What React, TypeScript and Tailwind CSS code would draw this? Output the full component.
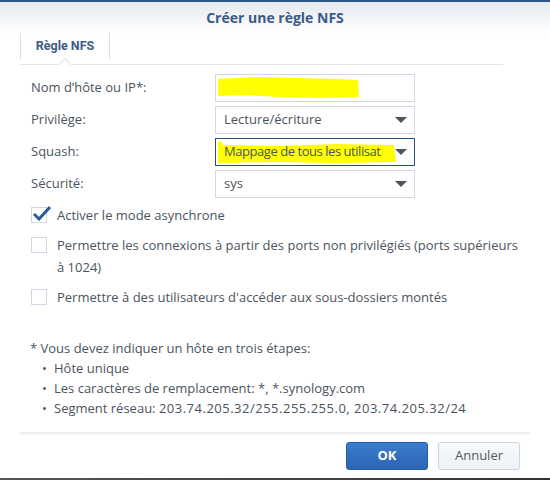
import React from "react";

const font = { fontFamily: "'Open Sans', Roboto, sans-serif" };
const tabFont = { fontFamily: "Roboto, 'Open Sans', sans-serif" };

function Caret() {
  return (
    <svg width="12" height="7" viewBox="0 0 12 7" className="shrink-0">
      <polygon points="0,0 12,0 6,6" fill="#4b5560" />
    </svg>
  );
}

function Select({ value, focused, highlight }: { value: string; focused?: boolean; highlight?: boolean }) {
  return (
    <div
      className={`relative flex h-[28px] w-[200px] items-center justify-between border pl-[8px] pr-[7px] ${
        focused ? "border-[#2b4f80]" : "border-[#cfd8e2]"
      }`}
    >
      {highlight && (
        <svg className="absolute left-[2px] top-[1px]" width="178" height="24" viewBox="0 0 178 24">
          <polygon points="0,2 3,1 5,5 60,6 120,4 176,5 178,22 120,23 60,22 0,23" fill="#ffff00" />
        </svg>
      )}
      <span
        className={`relative whitespace-nowrap text-[13px] text-[#4a545e] ${
          highlight ? "tracking-[-0.45px]" : ""
        }`}
      >
        {value}
      </span>
      <Caret />
    </div>
  );
}

function Row({ label, children }: { label: string; children: React.ReactNode }) {
  return (
    <div className="flex h-[28px] items-center">
      <div className="w-[184px] text-[13px] text-[#4a545e]">{label}</div>
      {children}
    </div>
  );
}

function Check({ checked, children }: { checked?: boolean; children: React.ReactNode }) {
  return (
    <div className="flex items-start">
      <div className="relative mt-[3px] h-[16px] w-[16px] shrink-0 border border-[#cfd8e2] bg-white">
        {checked && (
          <svg className="absolute left-[1px] top-[-3px]" width="18" height="16" viewBox="0 0 18 16">
            <path d="M1 9 L6 14 L17 2" stroke="#2d5d99" strokeWidth="3" fill="none" strokeLinejoin="miter" />
          </svg>
        )}
      </div>
      <div className="ml-[10px] whitespace-nowrap text-[13px] leading-[22px] text-[#4a545e]">{children}</div>
    </div>
  );
}

export default function App() {
  return (
    <div className="relative flex h-[480px] w-[550px] flex-col overflow-hidden bg-white" style={font}>
      <div className="h-[2px] bg-[#2c5588]" />
      <div className="flex h-[31px] items-center justify-center bg-gradient-to-b from-[#e3e9f0] to-white">
        <span className="text-[14px] font-bold text-[#3b5b84]">Créer une règle NFS</span>
      </div>
      {/* tabs */}
      <div className="relative ml-[20px] mr-[47px] flex h-[32px] items-end border-b border-[#dfe4ea]">
        <div className="mb-[5px] flex h-[26px] w-[90px] items-center justify-center border-l border-r border-[#d6dee7]">
          <span className="text-[12.5px] font-bold text-[#3b5b84]" style={tabFont}>
            Règle NFS
          </span>
        </div>
        <div className="absolute bottom-[-1px] left-[38px] h-[7px] w-[14px] overflow-hidden">
          <div className="absolute left-[2px] top-[2px] h-[10px] w-[10px] rotate-45 border-l border-t border-[#dfe4ea] bg-white" />
        </div>
      </div>
      {/* form */}
      <div className="mt-[9px] flex flex-col gap-[4px] pl-[31px]">
        <Row label="Nom d’hôte ou IP*:">
          <div className="relative h-[28px] w-[200px] border border-[#cfd8e2]">
            <svg className="absolute left-[2px] top-[2px]" width="142" height="22" viewBox="0 0 142 22">
              <polygon points="0,2 40,0 80,1 120,2 140,3 141,20 100,21 60,20 30,18 0,19" fill="#ffff00" />
            </svg>
          </div>
        </Row>
        <Row label="Privilège:">
          <Select value="Lecture/écriture" />
        </Row>
        <Row label="Squash:">
          <Select value="Mappage de tous les utilisat" focused highlight />
        </Row>
        <Row label="Sécurité:">
          <Select value="sys" />
        </Row>
      </div>
      <div className="mt-[6px] flex flex-col gap-[8px] pl-[31px]">
        <Check checked>Activer le mode asynchrone</Check>
        <Check>
          Permettre les connexions à partir des ports non privilégiés (ports supérieurs
          <br />à 1024)
        </Check>
        <Check>Permettre à des utilisateurs d'accéder aux sous-dossiers montés</Check>
      </div>
      <div className="mt-[30px] pl-[30px] text-[13px] leading-[20px] text-[#4a545e]">
        <div>* Vous devez indiquer un hôte en trois étapes:</div>
        <ul className="pl-[12px]">
          <li className="flex">
            <span className="w-[12px]">•</span>Hôte unique
          </li>
          <li className="flex">
            <span className="w-[12px]">•</span>Les caractères de remplacement: *, *.synology.com
          </li>
          <li className="flex whitespace-nowrap">
            <span className="w-[12px]">•</span>Segment réseau:&nbsp;
            <span className="tracking-[0.5px]">203.74.205.32/255.255.255.0, 203.74.205.32/24</span>
          </li>
        </ul>
      </div>
      <div className="mx-[20px] mt-[14px] h-[3px] bg-gradient-to-b from-[#e6e9ec] to-[#f7f8f9]" />
      <div className="mt-[7px] flex justify-end gap-[10px] pr-[30px]">
        <button className="h-[28px] w-[82px] rounded-[3px] border border-[#2459a3] bg-gradient-to-b from-[#3a7dcc] to-[#2b65b4] text-[13px] font-bold text-white">
          OK
        </button>
        <button className="h-[28px] w-[82px] rounded-[3px] border border-[#c9d5e1] bg-gradient-to-b from-[#f7f9fb] to-[#eef2f6] text-[13px] text-[#505a64]">
          Annuler
        </button>
      </div>
      <div className="absolute bottom-0 left-0 h-[2px] w-full bg-gradient-to-r from-[#555] to-[#333]" />
    </div>
  );
}
